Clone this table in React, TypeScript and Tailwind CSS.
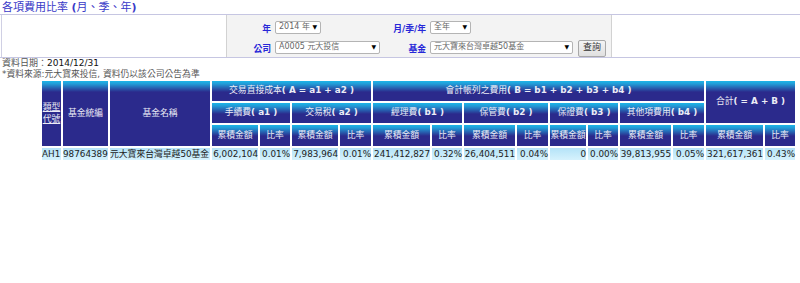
import React from "react";

const FONT = "font-['DejaVu_Sans','Noto_Sans_CJK_TC',sans-serif]";

const HB =
  "p-0 text-center align-middle text-[#ececf6] text-[8.8px] font-normal whitespace-nowrap bg-[linear-gradient(to_bottom,#1cb6e8_0px,#229ad6_3px,#2b2a8c_11px,#2b2a8c_100%)]";
const DC =
  "p-0 h-[12px] leading-[12px] text-[8.8px] text-[#222] whitespace-nowrap bg-[linear-gradient(to_bottom,#b4e3f8,#d6f2fd)]";

function Sel({ w, text }: { w: string; text: string }) {
  return (
    <div
      className={`${w} h-[13px] bg-white border border-[#b4b4b4] rounded-[2px] flex items-center justify-between pl-[3px] pr-[3px] text-[8px] text-[#666] leading-none whitespace-nowrap overflow-hidden`}
    >
      <span>{text}</span>
      <span className="text-[6px] text-black">▼</span>
    </div>
  );
}

function L({ children }: { children: React.ReactNode }) {
  return (
    <span className="text-[8.8px] font-bold text-[#2727d8] leading-none whitespace-nowrap">{children}</span>
  );
}

export default function App() {
  const widths = [
    "w-[19px]", "w-[45px]", "w-[100px]", "w-[46px]", "w-[30px]", "w-[46px]", "w-[31px]",
    "w-[57px]", "w-[30px]", "w-[51px]", "w-[31px]", "w-[36px]", "w-[30px]", "w-[51px]",
    "w-[31px]", "w-[57px]", "w-[30px]",
  ];
  const data = [
    ["6,002,104", "0.01%"],
    ["7,983,964", "0.01%"],
    ["241,412,827", "0.32%"],
    ["26,404,511", "0.04%"],
    ["0", "0.00%"],
    ["39,813,955", "0.05%"],
    ["321,617,361", "0.43%"],
  ];
  return (
    <div className={`${FONT} w-[800px] h-[283px] bg-white overflow-hidden`}>
      {/* title */}
      <div className="h-[14px] pl-[2px] pt-[1px] text-[11px] leading-[13px] text-[#3a3ac8] whitespace-nowrap">
        各項費用比率 <span className="font-bold">(</span>月、季、年<span className="font-bold">)</span>
      </div>
      {/* filter box */}
      <div className="h-[44px] border-y border-[#c6c6e2] flex">
        <div className="w-[225px] ml-[1px] border-l border-[#d0d0e4]" />
        <div className="w-[386px] bg-[#f3f3f3] border-x border-[#d2d2d2] flex flex-col">
          <div className="h-[17px] grid grid-cols-[48px_106px_49px_1fr] items-center">
            <div className="text-right pr-[4px]"><L>年</L></div>
            <Sel w="w-[46px]" text="2014 年" />
            <div className="text-right pr-[4px]"><L>月/季/年</L></div>
            <Sel w="w-[41px]" text="全年" />
          </div>
          <div className="h-[17px] mt-[3px] grid grid-cols-[48px_106px_49px_1fr] items-center">
            <div className="text-right pr-[4px]"><L>公司</L></div>
            <Sel w="w-[105px]" text="A0005 元大投信" />
            <div className="text-right pr-[4px]"><L>基金</L></div>
            <div className="flex items-center gap-[5px]">
              <Sel w="w-[143px]" text="元大寶來台灣卓越50基金" />
              <div className="w-[28px] h-[17px] mt-[2px] border border-[#a8a8a8] rounded-[2px] bg-[linear-gradient(to_bottom,#f4f4f4,#e0e0e0)] flex items-center justify-center text-[9px] text-[#333]">
                查詢
              </div>
            </div>
          </div>
        </div>
      </div>
      {/* notes */}
      <div className="h-[11px] pl-[2px] leading-[11px] text-[9px] text-[#555] whitespace-nowrap">
        資料日期：<span className="text-[#111] text-[9px]">2014/12/31</span>
      </div>
      <div className="h-[10px] pl-[2px] leading-[10px] text-[8.8px] text-[#555] whitespace-nowrap">
        *資料來源:元大寶來投信, 資料仍以該公司公告為準
      </div>
      {/* table */}
      <table className="ml-[40px] table-fixed border-separate border-spacing-[2px] w-[757px]">
        <colgroup>
          {widths.map((w, i) => (
            <col key={i} className={w} />
          ))}
        </colgroup>
        <thead>
          <tr className="h-[20px]">
            <th rowSpan={3} className={HB}>
              <span className="underline leading-[12px] inline-block">類型<br />代號</span>
            </th>
            <th rowSpan={3} className={HB}>基金統編</th>
            <th rowSpan={3} className={HB}>基金名稱</th>
            <th colSpan={4} className={HB}>
              交易直接成本<b>( A = a1 + a2 )</b>
            </th>
            <th colSpan={8} className={HB}>
              會計帳列之費用<b>( B = b1 + b2 + b3 + b4 )</b>
            </th>
            <th colSpan={2} rowSpan={2} className={HB}>
              合計<b>( = A + B )</b>
            </th>
          </tr>
          <tr className="h-[20px]">
            <th colSpan={2} className={HB}>手續費<b>( a1 )</b></th>
            <th colSpan={2} className={HB}>交易稅<b>( a2 )</b></th>
            <th colSpan={2} className={HB}>經理費<b>( b1 )</b></th>
            <th colSpan={2} className={HB}>保管費<b>( b2 )</b></th>
            <th colSpan={2} className={HB}>保證費<b>( b3 )</b></th>
            <th colSpan={2} className={HB}>其他項費用<b>( b4 )</b></th>
          </tr>
          <tr className="h-[21px]">
            {Array.from({ length: 7 }).map((_, i) => (
              <React.Fragment key={i}>
                <th className={HB}>累積金額</th>
                <th className={HB}>比率</th>
              </React.Fragment>
            ))}
          </tr>
        </thead>
        <tbody>
          <tr>
            <td className={`${DC} text-left`}>AH1</td>
            <td className={`${DC} text-left`}>98764389</td>
            <td className={`${DC} text-left`}>元大寶來台灣卓越50基金</td>
            {data.map(([a, b], i) => (
              <React.Fragment key={i}>
                <td className={`${DC} text-right`}>{a}</td>
                <td className={`${DC} text-right`}>{b}</td>
              </React.Fragment>
            ))}
          </tr>
        </tbody>
      </table>
    </div>
  );
}
